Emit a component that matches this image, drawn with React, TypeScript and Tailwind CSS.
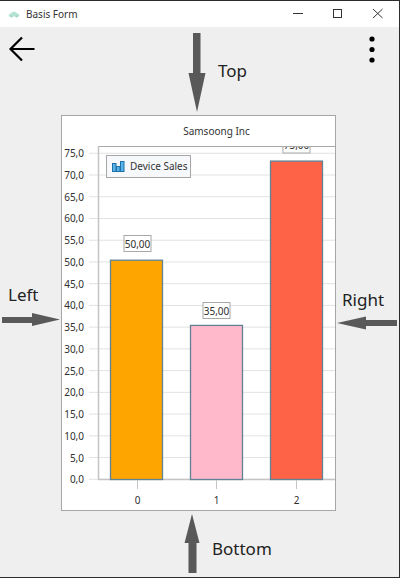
import React from 'react';

const font = "font-['Noto_Sans',sans-serif]";

const ticks = [75, 70, 65, 60, 55, 50, 45, 40, 35, 30, 25, 20, 15, 10, 5, 0];
const yFor = (v: number) => 333.3 - v * 4.347;

const bars = [
    { x: 48.5, w: 52, value: 50.4, label: '50,00', fill: '#ffa500', cat: '0', cx: 75.5, labelTop: 89.5 },
    { x: 128.5, w: 52, value: 35.4, label: '35,00', fill: '#ffb9ca', cat: '1', cx: 154.5, labelTop: 156.5 },
    { x: 208.5, w: 52, value: 73.2, label: '73,00', fill: '#ff6347', cat: '2', cx: 234.5, labelTop: -9 },
];

const ChartPlot: React.FC = () => (
    <svg width="273" height="364" viewBox="0 0 273 364" className="block" fontFamily="'Noto Sans', sans-serif">
        <defs>
            <clipPath id="plotClip">
                <rect x="36" y="1" width="237" height="334" />
            </clipPath>
        </defs>
        {ticks.map((t) => (
            <g key={t}>
                <line x1="27" x2="273" y1={yFor(t)} y2={yFor(t)} stroke="#e2e2e2" strokeWidth="1" />
                <text x="22" y={yFor(t) + 4} textAnchor="end" fontSize="10" fill="#303030">
                    {t.toFixed(1).replace('.', ',')}
                </text>
            </g>
        ))}
        <line x1="36" x2="273" y1="0.5" y2="0.5" stroke="#a8a8a8" />
        <line x1="36.5" x2="36.5" y1="0" y2="334" stroke="#c4c4c4" strokeWidth="1.5" />
        <line x1="36" x2="273" y1="333.5" y2="333.5" stroke="#c4c4c4" strokeWidth="1.5" />
        {bars.map((b) => (
            <g key={b.cat}>
                <rect x={b.x} y={yFor(b.value)} width={b.w} height={333.5 - yFor(b.value)} fill={b.fill} stroke="#5f8296" strokeWidth="1.3" />
                <line x1={b.cx} x2={b.cx} y1="334" y2="343" stroke="#c4c4c4" />
                <text x={b.cx} y="358" textAnchor="middle" fontSize="10" fill="#303030">{b.cat}</text>
                <g clipPath="url(#plotClip)">
                    <rect x={b.cx - 13.5} y={b.labelTop} width="27" height="16" fill="#ffffff" stroke="#a8a8a8" />
                    <text x={b.cx} y={b.labelTop + 12} textAnchor="middle" fontSize="10" fill="#303030">{b.label}</text>
                </g>
            </g>
        ))}
    </svg>
);

export default function App() {
    return (
        <div className={`${font} flex h-[578px] w-[400px] flex-col overflow-hidden border-t border-b border-r border-[#2c2c2c] bg-[#efefef] text-[#222]`}>
            {/* title bar */}
            <div className="flex h-[26px] items-center bg-white">
                <svg width="12" height="8" viewBox="0 0 12 8" className="ml-[8px]">
                    <path d="M1 6.5C0 4.5 2 3.5 3 3.5 4 1 8 1 9 3.5 11 3.5 12 5 11 6.5Z" fill="#b5e3d3" />
                    <circle cx="3.5" cy="6.5" r="1" fill="#8fd0bb" />
                    <circle cx="8.5" cy="6.5" r="1" fill="#8fd0bb" />
                </svg>
                <span className="ml-[6px] text-[10px] text-[#333]">Basis Form</span>
                <svg width="92" height="12" viewBox="0 0 92 12" className="ml-auto mr-[16px]" fill="none" stroke="#333">
                    <path d="M2 5.5H12" />
                    <rect x="42.5" y="1.5" width="8" height="8" />
                    <path d="M82 1L91.5 10M91.5 1L82 10" />
                </svg>
            </div>

            {/* top band: back, top arrow, menu */}
            <div className="flex h-[88px] items-start">
                <svg width="28" height="28" viewBox="0 0 28 28" className="ml-[8px] mt-[8px]" fill="none" stroke="#000" strokeWidth="2.2">
                    <path d="M26.5 14H2.5M14 2.5L2.5 14L14 25.5" />
                </svg>
                <svg width="18" height="80" viewBox="0 0 18 80" className="ml-[152px] mt-[6px]" fill="#595959">
                    <path d="M5 0H12.5V40H17.5L9 79L0.5 40H5Z" />
                </svg>
                <span className="ml-[12px] mt-[32px] text-[17px] leading-[24px]">Top</span>
                <svg width="8" height="28" viewBox="0 0 8 28" className="ml-auto mr-[23px] mt-[9px]" fill="#000">
                    <circle cx="4" cy="3" r="2.6" />
                    <circle cx="4" cy="13.5" r="2.6" />
                    <circle cx="4" cy="24" r="2.6" />
                </svg>
            </div>

            {/* middle band: left, chart, right */}
            <div className="flex h-[396px]">
                <div className="flex w-[61px] flex-col pt-[168px]">
                    <span className="ml-[8px] text-[17px] leading-[24px]">Left</span>
                    <svg width="59" height="14" viewBox="0 0 59 14" className="ml-[2px] mt-[6px]" fill="#595959">
                        <path d="M0 4H30V0L58 6.5L30 13V10H0Z" />
                    </svg>
                </div>
                <div className="relative flex w-[275px] flex-col border border-[#a6a6a6] bg-white">
                    <div className="flex h-[30px] items-center justify-center pl-[36px] text-[10px] text-[#333]">Samsoong Inc</div>
                    <ChartPlot />
                    {/* legend sits on top of the plot */}
                    <div className="absolute left-[44px] top-[39px] flex h-[23px] w-[85px] items-center border border-[#a6a6a6] bg-[#f6f8fc] pl-[5px] text-[10px] text-[#333]">
                        <svg width="13" height="11" viewBox="0 0 13 11" fill="#58b4e8" stroke="#1f6fa8">
                            <rect x="0.5" y="2.5" width="3.5" height="8" />
                            <rect x="4.5" y="5.5" width="3.5" height="5" />
                            <rect x="8.5" y="0.5" width="3.5" height="10" />
                        </svg>
                        <span className="ml-[5px] whitespace-nowrap">Device Sales</span>
                    </div>
                </div>
                <div className="flex flex-1 flex-col pt-[173px]">
                    <span className="ml-[6px] text-[17px] leading-[24px]">Right</span>
                    <svg width="61" height="14" viewBox="0 0 61 14" className="ml-[1px] mt-[4px]" fill="#595959">
                        <path d="M0 7L29 0.5V4H60V10H29V13.5Z" />
                    </svg>
                </div>
            </div>

            {/* bottom band */}
            <div className="flex flex-1 items-start">
                <svg width="16" height="60" viewBox="0 0 16 60" className="ml-[184px] mt-[3px]" fill="#595959">
                    <path d="M8 0L15.5 29H12.5V59H4.5V29H0.5Z" />
                </svg>
                <span className="ml-[12px] mt-[26px] text-[17px] leading-[24px]">Bottom</span>
            </div>
        </div>
    );
}
